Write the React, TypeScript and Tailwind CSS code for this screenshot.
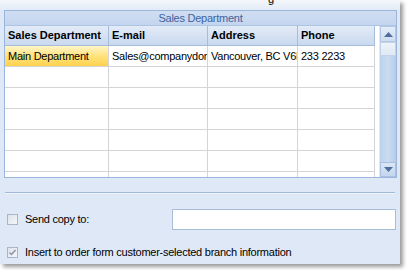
import "react";

const cols = [
  { label: "Sales Department", w: "w-[104px]" },
  { label: "E-mail", w: "w-[99px]" },
  { label: "Address", w: "w-[90px]" },
  { label: "Phone", w: "w-[77px]" },
];

const firstRow = ["Main Department", "Sales@companydomain.com", "Vancouver, BC V6B", "233 2233"];

const Cell = ({ text, w, selected }: { text?: string; w: string; selected?: boolean }) => (
  <div
    className={`${w} h-[21px] shrink-0 border-r border-b border-[#d4d4d4] px-[3px] flex items-center overflow-hidden whitespace-nowrap text-[11px] tracking-[-0.25px] text-black ${
      selected ? "bg-gradient-to-b from-[#fff6c8] via-[#ffe27a] to-[#ffd24d]" : "bg-white"
    }`}
  >
    {text}
  </div>
);

const Checkbox = ({ checked }: { checked?: boolean }) => (
  <div className="w-[11px] h-[11px] shrink-0 border border-[#a9b6c8] bg-gradient-to-br from-[#dfe3ea] to-[#f4f6f9] flex items-center justify-center">
    {checked && (
      <svg width="9" height="9" viewBox="0 0 9 9">
        <path d="M1.5 4.5 L3.5 6.5 L7.5 2" fill="none" stroke="#8a94a6" strokeWidth="1.5" />
      </svg>
    )}
  </div>
);

export default function App() {
  return (
    <div className="w-[409px] h-[270px] bg-white font-['Liberation_Sans',Arial,sans-serif] overflow-hidden">
      <div className="w-[400px] h-[264px] bg-[#dfe8f6] shadow-[3px_3px_4px_rgba(0,0,0,0.4)] flex flex-col relative">
        <div className="h-[10px] bg-gradient-to-b from-[#f4f7fc] to-[#e3ebf7] relative overflow-hidden">
          <span className="absolute left-[268px] top-[-9px] text-[11px] text-black">g</span>
        </div>
        <div className="mx-[4px] w-[393px] border border-[#9ab6dd] bg-white flex flex-col">
          <div className="h-[15px] bg-gradient-to-b from-[#d0def2] to-[#c3d5ee] text-[11px] tracking-[-0.25px] text-[#3d64a0] flex items-center justify-center border-b border-[#adc4e4]">
            Sales Department
          </div>
          <div className="flex">
            <div className="flex flex-col">
              <div className="flex">
                {cols.map((c) => (
                  <div
                    key={c.label}
                    className={`${c.w} h-[20px] shrink-0 px-[3px] flex items-center text-[11px] font-bold text-black border-r border-b border-[#a7bcd9] bg-gradient-to-b from-[#e3ebf7] to-[#c9d9ef]`}
                  >
                    {c.label}
                  </div>
                ))}
              </div>
              <div className="flex">
                {cols.map((c, i) => (
                  <Cell key={i} w={c.w} text={firstRow[i]} selected={i === 0} />
                ))}
              </div>
              {[0, 1, 2, 3, 4].map((r) => (
                <div key={r} className="flex">
                  {cols.map((c, i) => (
                    <Cell key={i} w={c.w} />
                  ))}
                </div>
              ))}
              <div className="flex h-[5px]">
                {cols.map((c, i) => (
                  <div key={i} className={`${c.w} shrink-0 border-r border-[#d4d4d4]`} />
                ))}
              </div>
            </div>
            <div className="w-[19px] ml-[4px] flex flex-col bg-gradient-to-r from-[#bcd1ec] via-[#cadcf2] to-[#b6cce9] border-l border-[#dfe8f6]">
              <div className="h-[16px] flex items-center justify-center bg-gradient-to-b from-[#e4edf8] to-[#cfddf1] border border-[#b3c7e3]">
                <svg width="9" height="5" viewBox="0 0 9 5">
                  <path d="M0 5 L4.5 0 L9 5 Z" fill="#4e6e9c" />
                </svg>
              </div>
              <div className="h-[14px] bg-gradient-to-b from-[#eef3fa] to-[#dfe8f4] border border-[#c2d3ea]" />
              <div className="flex-1" />
              <div className="h-[15px] flex items-center justify-center bg-gradient-to-b from-[#dbe6f4] to-[#c4d6ee] border border-[#a9c0e0]">
                <svg width="9" height="5" viewBox="0 0 9 5">
                  <path d="M0 0 L9 0 L4.5 5 Z" fill="#4e6e9c" />
                </svg>
              </div>
            </div>
          </div>
        </div>
        <div className="mx-[5px] mt-[14px] h-[2px] border-t border-[#9fb9dc] border-b border-b-[#f2f6fc]" />
        <div className="flex items-center mt-[14px] pl-[7px] h-[22px]">
          <Checkbox />
          <span className="ml-[7px] w-[147px] shrink-0 text-[11px] tracking-[-0.25px] text-black">Send copy to:</span>
          <div className="w-[224px] h-[21px] bg-white border border-[#a7bcd9]" />
        </div>
        <div className="flex items-center mt-[14px] pl-[7px]">
          <Checkbox checked />
          <span className="ml-[7px] text-[11px] tracking-[-0.25px] text-black">Insert to order form customer-selected branch information</span>
        </div>
      </div>
    </div>
  );
}
